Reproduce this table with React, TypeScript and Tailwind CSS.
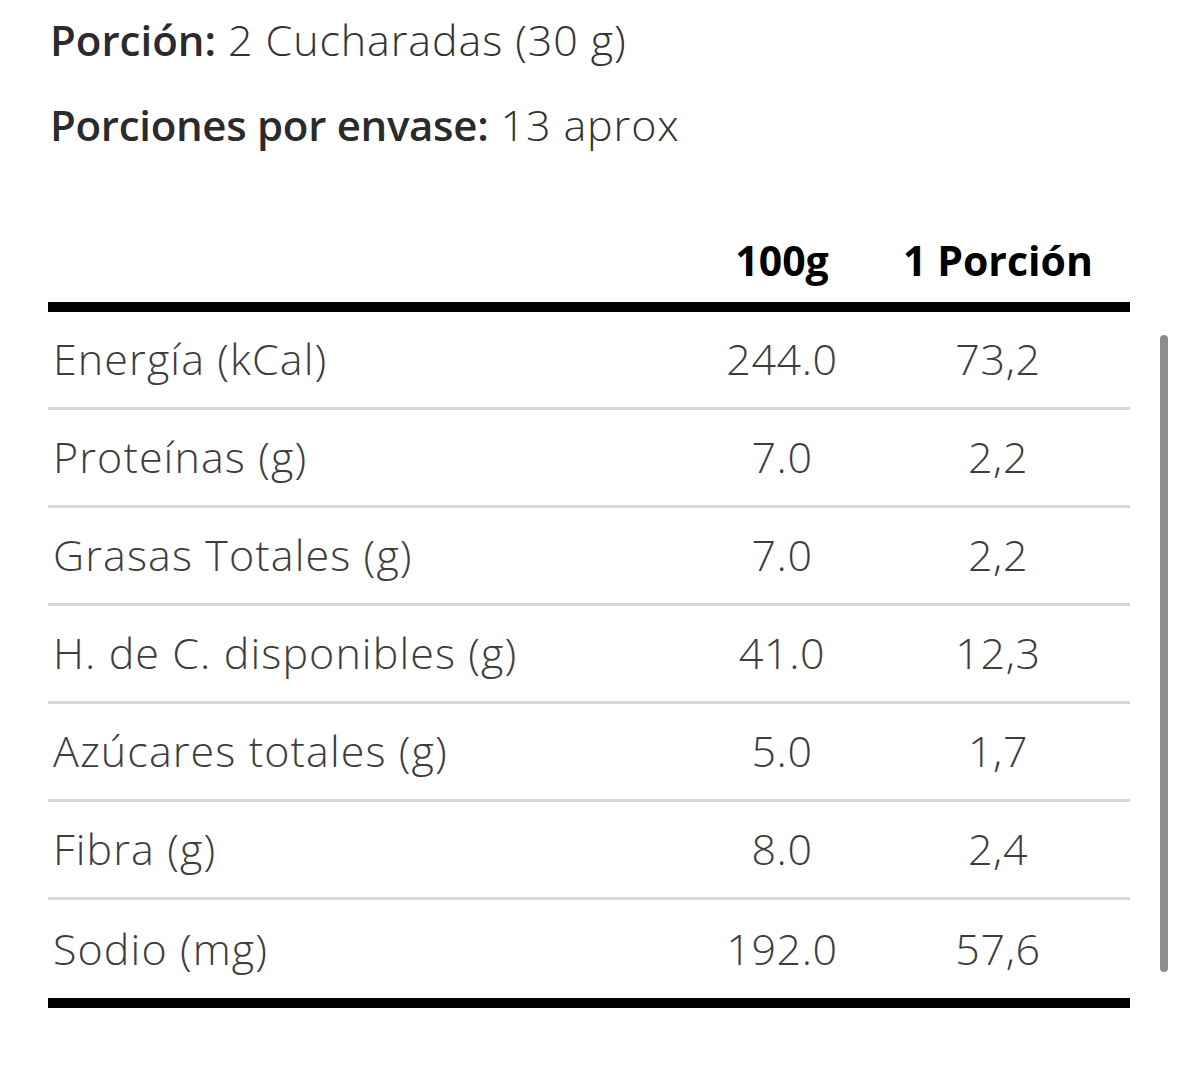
import React from "react";

const rows = [
  ["Energía (kCal)", "244.0", "73,2"],
  ["Proteínas (g)", "7.0", "2,2"],
  ["Grasas Totales (g)", "7.0", "2,2"],
  ["H. de C. disponibles (g)", "41.0", "12,3"],
  ["Azúcares totales (g)", "5.0", "1,7"],
  ["Fibra (g)", "8.0", "2,4"],
  ["Sodio (mg)", "192.0", "57,6"],
];

export default function App() {
  return (
    <div
      className="relative w-[1179px] h-[1070px] bg-white overflow-hidden"
      style={{ fontFamily: "'Open Sans', 'Noto Sans', sans-serif" }}
    >
      <div className="pl-[50px] pt-[16px] text-[#333] text-[43px] font-light tracking-[0.9px]">
        <div className="h-[48px] leading-[48px]">
          <span className="font-semibold text-[#2b2b2b] text-[42px] tracking-normal">Porción:</span> 2 Cucharadas (30 g)
        </div>
        <div className="mt-[37px] h-[48px] leading-[48px]">
          <span className="font-semibold text-[#2b2b2b] text-[42px] tracking-[-0.3px]">Porciones por envase:</span> 13 aprox
        </div>
      </div>

      <div className="ml-[48px] w-[1082px] mt-[76px]">
        <div className="grid grid-cols-[1fr_168px_264px] h-[77px] items-end pb-[20px] text-black font-bold text-[41px] leading-[44px]">
          <div></div>
          <div className="text-center">100g</div>
          <div className="text-center">1 Porción</div>
        </div>
        <div className="h-[10px] bg-black"></div>
        {rows.map((r, i) => (
          <div
            key={i}
            className={
              "grid grid-cols-[1fr_168px_264px] items-center h-[98px] text-[43px] font-light text-[#3d3d3d] " +
              (i < rows.length - 1 ? "border-b-[3px] border-[#d6d6d6]" : "")
            }
          >
            <div className="pl-[5px] tracking-[1.1px]">{r[0]}</div>
            <div className="text-center tracking-[0.6px]">{r[1]}</div>
            <div className="text-center tracking-[0.6px]">{r[2]}</div>
          </div>
        ))}
        <div className="h-[10px] bg-black"></div>
      </div>

      <div className="absolute left-[1160px] top-[335px] w-[8px] h-[637px] rounded-full bg-[#8c8c8c]"></div>
    </div>
  );
}
